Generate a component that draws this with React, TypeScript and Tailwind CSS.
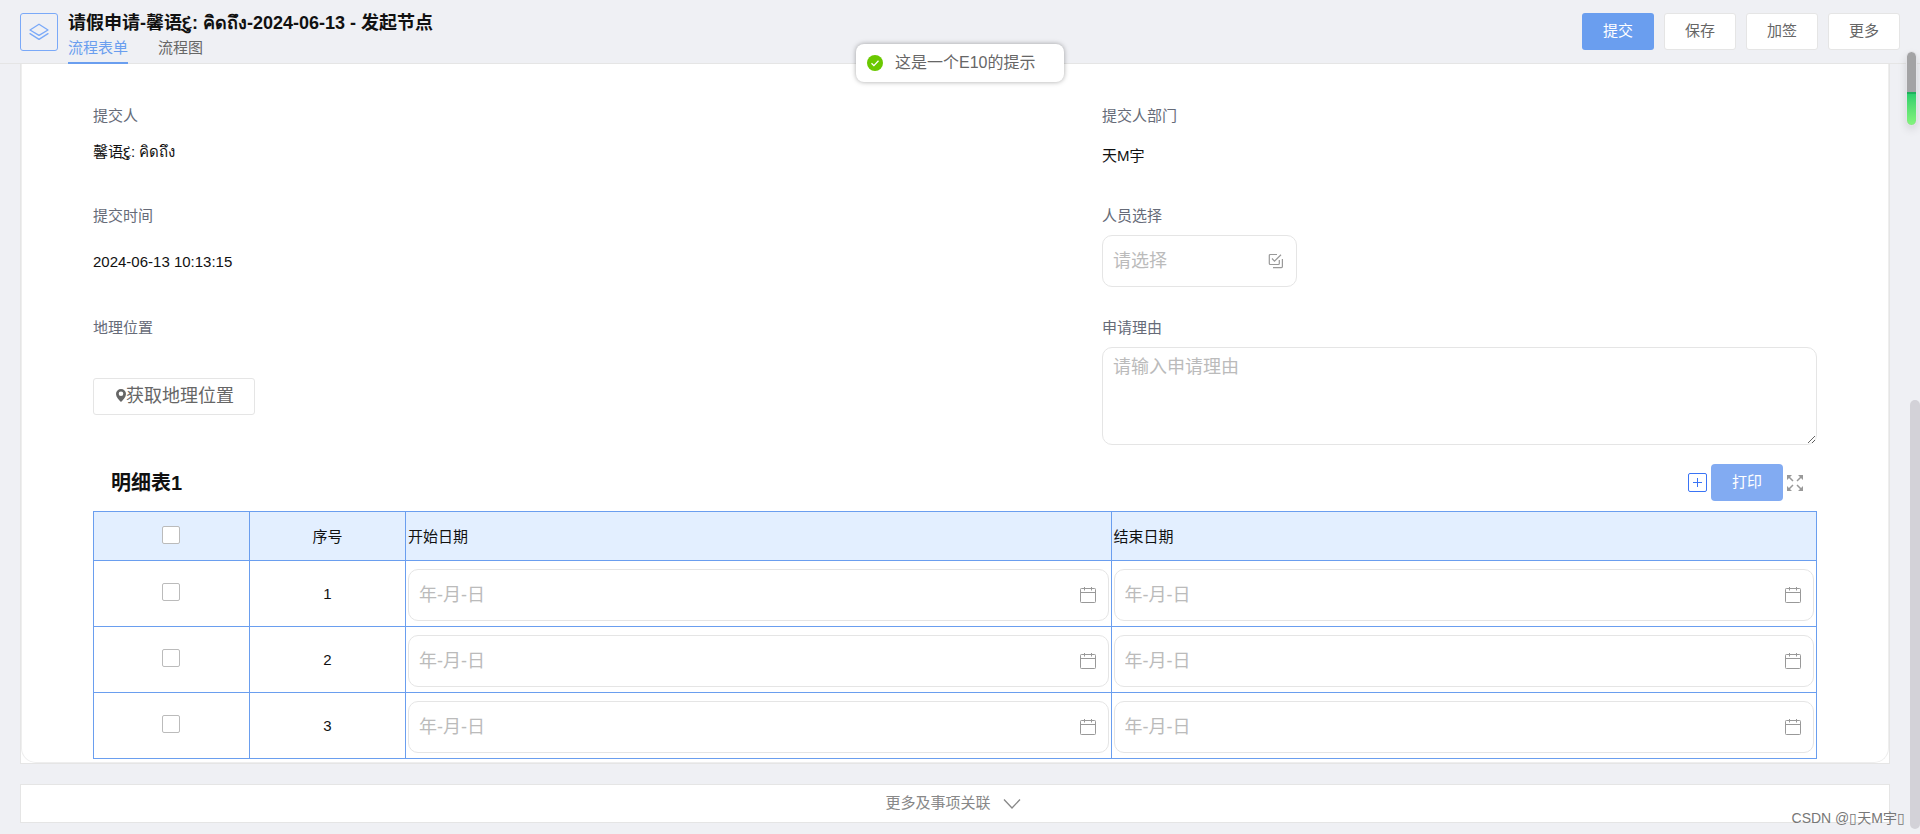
import React, { useState } from "react";

const HEADER_ACTIONS = ["保存", "加签", "更多"];
const ROWS = [1, 2, 3];

function LayersIcon() {
  return (
    <svg viewBox="0 0 20 18" className="h-[18px] w-5" fill="none" stroke="currentColor" strokeWidth="1.3" strokeLinejoin="round" strokeLinecap="round">
      <path d="M10 1.2 19 7 10 12.4 1 7Z" />
      <path d="M1 10.6 10 16.4l9-5.8" />
    </svg>
  );
}

function PickIcon() {
  return (
    <svg viewBox="0 0 16 16" className="h-4 w-4" fill="none" stroke="currentColor" strokeWidth="1.2">
      <path d="M9 1.5H2.3a1 1 0 0 0-1 1v8a1 1 0 0 0 1 1h8a1 1 0 0 0 1-1V7" />
      <path d="m4 5.5 2.5 2.6 6.5-6.4" />
      <path d="M14.4 6v7.6a1 1 0 0 1-1 1H5" />
    </svg>
  );
}

function PinIcon() {
  return (
    <svg viewBox="0 0 10 13" className="h-[13px] w-[10px]" fill="currentColor">
      <path fillRule="evenodd" d="M5 0a5 5 0 0 0-5 5c0 2.900 2.700 5.600 5 8 2.300-2.400 5-5.100 5-8a5 5 0 0 0-5-5Zm0 2.500a2.300 2.300 0 1 1 0 4.600A2.300 2.300 0 0 1 5 2.500Z" />
    </svg>
  );
}

function CalendarIcon() {
  return (
    <svg viewBox="0 0 16 16" className="h-4 w-4" fill="none" stroke="currentColor">
      <rect x="0.5" y="1.500" width="15" height="14" rx="0.8" />
      <path d="M.5 5.500h15M4.500 0v3.500M11.500 0v3.500" />
    </svg>
  );
}

function ExpandIcon() {
  return (
    <svg viewBox="0 0 16 16" className="h-4 w-4" fill="currentColor" stroke="currentColor" strokeWidth="1.5">
      <path d="M1.500 1.500 6 6M14.500 1.500 10 6M1.500 14.500 6 10M14.500 14.500 10 10" />
      <path stroke="none" d="M0 0h5L0 5ZM16 0v5l-5-5ZM0 16v-5l5 5ZM16 16h-5l5-5Z" />
    </svg>
  );
}

function Check({ label, checked, onChange }: { label: string; checked: boolean; onChange: () => void }) {
  return (
    <input
      type="checkbox"
      aria-label={label}
      checked={checked}
      onChange={onChange}
      className="block h-[18px] w-[18px] appearance-none rounded-[2px] border border-[#bbb] bg-white checked:border-[#6a9eef] checked:bg-[#6a9eef]"
    />
  );
}

function DateField({ label }: { label: string }) {
  return (
    <div className="flex h-[52px] items-center rounded-[10px] border border-[#e5e5e5] bg-white pr-3 pl-[10px] text-[#999]">
      <input
        type="text"
        aria-label={label}
        placeholder="年-月-日"
        className="min-w-0 flex-1 text-[18px] text-[#111] outline-none placeholder:text-[#bbb]"
      />
      <CalendarIcon />
    </div>
  );
}

export default function App() {
  const [selected, setSelected] = useState<number[]>([]);
  const all = selected.length === ROWS.length;
  const toggle = (n: number) =>
    setSelected((s) => (s.includes(n) ? s.filter((v) => v !== n) : [...s, n]));

  return (
    <div className="relative min-h-screen bg-[#eff0f4] pb-3 font-['Liberation_Sans','Noto_Sans_CJK_SC',sans-serif] text-[15px] text-[#111]">
      <header className="flex h-16 items-start justify-between border-b border-[#e5e5e5] px-5">
        <div className="flex gap-[10px]">
          <div className="mt-[13px] flex h-[38px] w-[38px] items-center justify-center rounded-[3px] border border-[#7aa9f8] text-[#7aa9f8]">
            <LayersIcon />
          </div>
          <div className="pt-[10px]">
            <h1 className="h-[26px] text-[18px] leading-[26px] font-bold whitespace-nowrap">
              请假申请-馨语દુ: คิดถึง-2024-06-13 - 发起节点
            </h1>
            <nav className="flex gap-[30px] text-[#666]">
              <a href="#form" className="h-7 border-b-2 border-[#6a9eef] leading-[24px] text-[#6a9eef]">流程表单</a>
              <a href="#chart" className="h-7 leading-[24px]">流程图</a>
            </nav>
          </div>
        </div>
        <div className="flex gap-[10px] pt-[13px]">
          <button type="button" className="h-[37px] w-[72px] rounded-[3px] bg-[#6a9eef] text-white">提交</button>
          {HEADER_ACTIONS.map((a) => (
            <button key={a} type="button" className="h-[37px] w-[72px] rounded-[3px] border border-[#e5e5e5] bg-white text-[#666]">{a}</button>
          ))}
        </div>
      </header>

      <main className="mr-[30px] ml-5">
        <section className="border border-t-0 border-[#e5e5e5] bg-white">
          <div className="rounded-b-[15px] border border-t-0 border-[#eee] px-[71px] pb-[3px]">
            <div className="grid grid-cols-[1009fr_715fr] pt-[41px] leading-[22px]">
              <div className="h-[100px]">
                <div className="text-[#666b78]">提交人</div>
                <div className="mt-[14px]">馨语દુ: คิดถึง</div>
              </div>
              <div>
                <div className="text-[#666b78]">提交人部门</div>
                <div className="mt-[18px]">天M宇</div>
              </div>
              <div className="h-[112px]">
                <div className="text-[#666b78]">提交时间</div>
                <div className="mt-6">2024-06-13 10:13:15</div>
              </div>
              <div>
                <label htmlFor="person" className="block text-[#666b78]">人员选择</label>
                <div className="mt-2 flex h-[52px] w-[195px] items-center rounded-[10px] border border-[#e5e5e5] pr-3 pl-[10px] text-[#999]">
                  <input id="person" type="text" placeholder="请选择" className="min-w-0 flex-1 text-[18px] text-[#111] outline-none placeholder:text-[#bbb]" />
                  <PickIcon />
                </div>
              </div>
              <div>
                <div className="text-[#666b78]">地理位置</div>
                <button type="button" className="mt-[39px] flex h-[37px] w-[162px] items-center justify-center rounded-[3px] border border-[#e5e5e5] pb-[2px] pl-[2px] text-[18px] text-[#666]">
                  <PinIcon />
                  获取地理位置
                </button>
              </div>
              <div>
                <label htmlFor="reason" className="block text-[#666b78]">申请理由</label>
                <textarea id="reason" placeholder="请输入申请理由" className="mt-2 block h-[98px] w-full resize rounded-[10px] border border-[#e5e5e5] px-[10px] py-[6px] text-[18px] leading-[26px] outline-none placeholder:text-[#bbb]" />
              </div>
            </div>

            <div className="mt-[19px] flex h-[37px] items-center justify-between pr-[14px] pl-[18px]">
              <h2 className="text-[20px] font-bold">明细表1</h2>
              <div className="flex items-center gap-1 text-[#999]">
                <button type="button" aria-label="添加" className="flex h-[19px] w-[19px] items-center justify-center rounded-[2px] border border-[#3a74f5] text-[#3a74f5]">
                  <svg viewBox="0 0 9 9" className="h-[9px] w-[9px]" stroke="currentColor" fill="none"><path d="M0 4.500h9M4.500 0v9" /></svg>
                </button>
                <button type="button" className="h-[37px] w-[72px] rounded-[4px] bg-[#82abf2] text-white">打印</button>
                <button type="button" aria-label="全屏"><ExpandIcon /></button>
              </div>
            </div>

            <table className="mt-[10px] w-full table-fixed border-collapse text-left">
              <colgroup>
                <col className="w-[156px]" />
                <col className="w-[156px]" />
                <col />
                <col />
              </colgroup>
              <thead>
                <tr className="h-[49px] bg-[#e3efff]">
                  <th className="border border-[#6a9eef]">
                    <div className="flex justify-center pr-[2px] pb-[2px]">
                      <Check label="全选" checked={all} onChange={() => setSelected(all ? [] : ROWS)} />
                    </div>
                  </th>
                  <th className="border border-[#6a9eef] pt-[2px] text-center font-normal">序号</th>
                  <th className="border border-[#6a9eef] px-[2px] pt-[2px] font-normal">开始日期</th>
                  <th className="border border-[#6a9eef] px-[2px] pt-[2px] font-normal">结束日期</th>
                </tr>
              </thead>
              <tbody>
                {ROWS.map((n) => (
                  <tr key={n} className="h-[66px]">
                    <td className="border border-[#6a9eef]">
                      <div className="flex justify-center pr-[2px] pb-[3px]">
                        <Check label={`选择 ${n}`} checked={selected.includes(n)} onChange={() => toggle(n)} />
                      </div>
                    </td>
                    <td className="border border-[#6a9eef] pt-[2px] text-center">{n}</td>
                    <td className="border border-[#6a9eef] px-[2px] pt-[3px]"><DateField label={`开始日期 ${n}`} /></td>
                    <td className="border border-[#6a9eef] px-[2px] pt-[3px]"><DateField label={`结束日期 ${n}`} /></td>
                  </tr>
                ))}
              </tbody>
            </table>
          </div>
        </section>

        <button type="button" className="mt-5 flex h-[39px] w-full items-center justify-center gap-3 border border-[#e5e5e5] bg-white pr-1 text-[#888]">
          更多及事项关联
          <svg viewBox="0 0 18 12" className="h-3 w-[18px]" fill="none" stroke="currentColor" strokeWidth="1.3"><path d="m1 1.500 8 8.500 8-8.500" /></svg>
        </button>
      </main>

      <div role="status" className="absolute top-11 left-1/2 flex h-[38px] w-[208px] -translate-x-1/2 items-center gap-3 rounded-[8px] bg-white pl-[11px] text-[16px] text-[#666] shadow-[0_0_5px_rgba(0,0,0,0.35)]">
        <svg viewBox="0 0 16 16" className="h-4 w-4 shrink-0"><circle cx="8" cy="8" r="8" fill="#6ac800" /><path d="m4.500 8.200 2.400 2.400 4.600-4.800" fill="none" stroke="#fff" strokeWidth="1.300" /></svg>
        这是一个E10的提示
      </div>

      <div className="absolute top-[400px] right-0 bottom-[6px] w-[10px] rounded-full bg-[#d3d2d8]" />
      <div className="absolute top-[52px] right-1 flex h-[73px] w-[9px] flex-col overflow-hidden rounded-full bg-[#a3a3a5] shadow-[0_4px_10px_rgba(0,0,0,0.15)] outline-1 outline-[#e4e4e8]">
        <div className="mt-10 flex-1 border-t-2 border-[#1fb05c] bg-linear-to-b from-[#2bcf6c] to-[#83f57d]" />
      </div>
      <div className="absolute right-[15px] bottom-[6px] text-[14px] leading-[22px] text-[#777]">CSDN @▯天M宇▯</div>
    </div>
  );
}
